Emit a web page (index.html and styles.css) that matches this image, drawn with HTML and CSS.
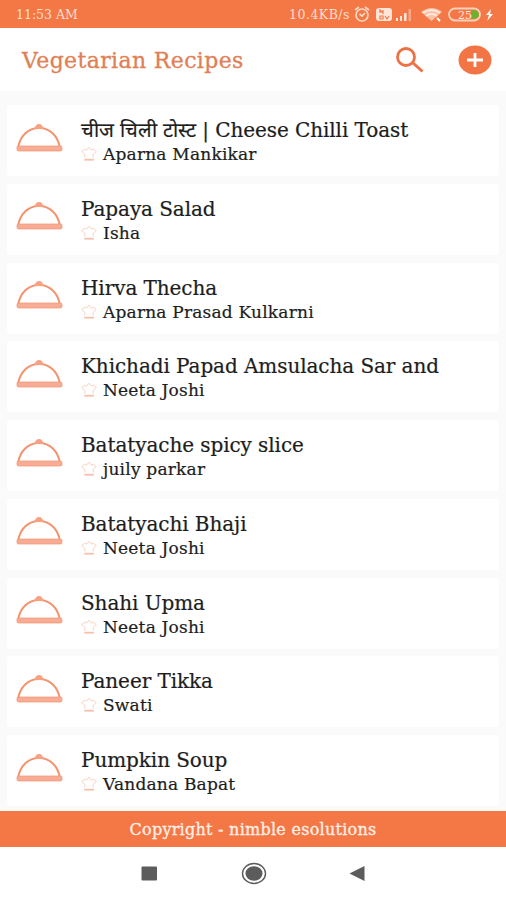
FILE: index.html
```html
<!DOCTYPE html>
<html lang="en">
<head>
    <meta charset="UTF-8">
    <meta name="viewport" content="width=device-width, initial-scale=1.0">
    <title>Vegetarian Recipes</title>
    <link rel="stylesheet" href="styles.css">
</head>
<body>
    <svg class="symbols">
        <symbol id="dish" viewBox="0 0 48 30">
            <path d="M3 25C5 13 13 5 24 5s19 8 21 20" fill="none" stroke="#f4936f" stroke-width="2"/>
            <path d="M19.500 6q1-5 4.500-5t4.500 5z" fill="#f7a082"/>
            <rect x="2" y="23" width="45" height="5" rx="1.500" fill="#f7ad95" stroke="#f4936f" stroke-width=".7"/>
        </symbol>
        <symbol id="hat" viewBox="0 0 16 16">
            <path d="M3.800 11.500V8.500L.8 5.500 3.500 3.300l2 .7L8 1.200l2.500 2.800 2-.7 2.700 2.200-3 3v3" fill="none" stroke="#f9cfbd" stroke-linejoin="round"/>
            <path d="M3.300 13.700h9.600" stroke="#f8bfa8" stroke-width="1.800"/>
        </symbol>
    </svg>
    <div class="status">
        <span class="time">11:53 AM</span>
        <span class="speed">10.4KB/s</span>
        <svg class="status-icons" viewBox="0 0 140 20" width="140" height="20">
            <g fill="none" stroke="#fdd9c5" stroke-width="1.700">
                <circle cx="8" cy="11" r="6"/>
                <path d="M1 6l4-3M15 6l-4-3M5.500 10l2.500 2 3-3"/>
            </g>
            <rect x="22" y="4" width="16" height="13" rx="3" fill="#fde6d8"/>
            <path d="M26 9V6l3 3V6M31 12l2 3 2-3M26 12h3v3h-3z" fill="none" stroke="#f47a4b" stroke-width="1.200"/>
            <path d="M42 14h2v3h-2zM46 12h2v5h-2zM50 9h2.500v8H50z" fill="#fde6d8"/>
            <path d="M54.500 5H57v12h-2.500z" fill="#f7a989"/>
            <path d="M67 8q11-8 21 0L77.500 17z" fill="#fbc3a8"/>
            <path d="M69 9q8.500-6 17 0M72 12q5.500-4 11 0" fill="none" stroke="#fff0e5" stroke-width="1.300"/>
            <path d="M83 14l3 3" stroke="#fff" stroke-width="2"/>
            <rect x="95" y="4.500" width="31" height="12" rx="6" fill="none" stroke="#fdd0ba" stroke-width="1.800"/>
            <path d="M117 6q8 0 8 4.500t-8 4.500z" fill="#6cb22e"/>
            <text x="104" y="15" class="charge">25</text>
            <path d="M137 5l-5 6h3l-2 6 6-7h-3z" fill="#fff"/>
        </svg>
    </div>
    <header>
        <h1>Vegetarian Recipes</h1>
        <svg class="search" viewBox="0 0 30 28" width="30" height="28">
            <circle cx="11" cy="11" r="8.500" fill="none" stroke="#ee7145" stroke-width="2.800"/>
            <path d="M17.500 16.500l10 9" stroke="#ee7145" stroke-width="3"/>
        </svg>
        <svg class="add" viewBox="0 0 34 30" width="34" height="30">
            <ellipse cx="17" cy="15" rx="16.500" ry="14.500" fill="#f37545"/>
            <path d="M9 15h16M17 8v14" stroke="#fff" stroke-width="2.800"/>
        </svg>
    </header>
    <main>
        <div class="card">
            <svg class="dish"><use href="#dish"/></svg>
            <div>
                <h2><span class="hindi">चीज चिली टोस्ट</span> | Cheese Chilli Toast</h2>
                <p><svg class="hat"><use href="#hat"/></svg>Aparna Mankikar</p>
            </div>
        </div>
        <div class="card">
            <svg class="dish"><use href="#dish"/></svg>
            <div>
                <h2>Papaya Salad</h2>
                <p><svg class="hat"><use href="#hat"/></svg>Isha</p>
            </div>
        </div>
        <div class="card">
            <svg class="dish"><use href="#dish"/></svg>
            <div>
                <h2>Hirva Thecha</h2>
                <p><svg class="hat"><use href="#hat"/></svg>Aparna Prasad Kulkarni</p>
            </div>
        </div>
        <div class="card">
            <svg class="dish"><use href="#dish"/></svg>
            <div>
                <h2>Khichadi Papad Amsulacha Sar and</h2>
                <p><svg class="hat"><use href="#hat"/></svg>Neeta Joshi</p>
            </div>
        </div>
        <div class="card">
            <svg class="dish"><use href="#dish"/></svg>
            <div>
                <h2>Batatyache spicy slice</h2>
                <p><svg class="hat"><use href="#hat"/></svg>juily parkar</p>
            </div>
        </div>
        <div class="card">
            <svg class="dish"><use href="#dish"/></svg>
            <div>
                <h2>Batatyachi Bhaji</h2>
                <p><svg class="hat"><use href="#hat"/></svg>Neeta Joshi</p>
            </div>
        </div>
        <div class="card">
            <svg class="dish"><use href="#dish"/></svg>
            <div>
                <h2>Shahi Upma</h2>
                <p><svg class="hat"><use href="#hat"/></svg>Neeta Joshi</p>
            </div>
        </div>
        <div class="card">
            <svg class="dish"><use href="#dish"/></svg>
            <div>
                <h2>Paneer Tikka</h2>
                <p><svg class="hat"><use href="#hat"/></svg>Swati</p>
            </div>
        </div>
        <div class="card">
            <svg class="dish"><use href="#dish"/></svg>
            <div>
                <h2>Pumpkin Soup</h2>
                <p><svg class="hat"><use href="#hat"/></svg>Vandana Bapat</p>
            </div>
        </div>
    </main>
    <footer>Copyright - nimble esolutions</footer>
    <nav>
        <svg viewBox="0 0 506 53" width="506" height="53">
            <rect x="141.500" y="19.500" width="15.500" height="14" rx="1" fill="#5c5c5c"/>
            <ellipse cx="254" cy="26.500" rx="11.500" ry="10" fill="none" stroke="#5c5c5c" stroke-width="1.400"/>
            <ellipse cx="254" cy="26.500" rx="8.500" ry="7.300" fill="#5c5c5c"/>
            <path d="M349.500 26.500l15-7.500v15z" fill="#5c5c5c"/>
        </svg>
    </nav>
</body>
</html>
```
FILE: styles.css
```css
body {
    font-family: 'DejaVu Serif', serif;
    margin: 0;
    height: 900px;
    display: flex;
    flex-direction: column;
    background: #fff;
    overflow: hidden;
}
.symbols {
    display: none;
}
.status {
    height: 28px;
    flex: none;
    box-sizing: border-box;
    padding: 0 12px 0 16px;
    display: flex;
    align-items: center;
    background: #f47746;
    color: #fddfcf;
    font-size: 12.5px;
    white-space: nowrap;
}
.speed {
    margin-left: auto;
    margin-right: 4px;
    letter-spacing: 0.5px;
}
.charge {
    font-size: 11px;
    fill: #fde6d8;
}
header {
    height: 63px;
    flex: none;
    box-sizing: border-box;
    padding: 0 14px 0 22px;
    display: flex;
    align-items: center;
}
h1 {
    margin: 2px 0 0;
    font-size: 22px;
    font-weight: normal;
    letter-spacing: 0.37px;
    color: #e08055;
    -webkit-text-stroke: 0.3px #e08055;
    white-space: nowrap;
}
.search {
    margin-left: auto;
}
.add {
    margin-left: 33px;
}
main {
    flex: 1;
    min-height: 0;
    overflow: hidden;
    padding: 14px 7px 0;
    background: #fafafa;
}
.card {
    height: 71px;
    margin-bottom: 7.75px;
    display: flex;
    border-radius: 3px;
    background: #fff;
}
.dish {
    width: 48px;
    height: 30px;
    margin: 17.500px 18px 0 8px;
}
h2 {
    margin: 11px 0 0;
    font-size: 20px;
    line-height: 28px;
    height: 27px;
    font-weight: normal;
    letter-spacing: -0.08px;
    color: #1d1d1d;
    -webkit-text-stroke: 0.2px #1d1d1d;
    white-space: nowrap;
}
p {
    margin: 0;
    display: flex;
    align-items: center;
    font-size: 17px;
    line-height: 22px;
    letter-spacing: 0.2px;
    color: #1d1d1d;
    -webkit-text-stroke: 0.2px #1d1d1d;
    white-space: nowrap;
}
.hat {
    width: 16px;
    height: 16px;
    margin-right: 6px;
}
footer {
    height: 36px;
    flex: none;
    background: #f47746;
    color: #fff0e6;
    font-size: 16px;
    line-height: 38px;
    letter-spacing: 0.26px;
    -webkit-text-stroke: 0.3px #fff0e6;
    text-align: center;
}
nav {
    height: 53px;
    flex: none;
}
```
